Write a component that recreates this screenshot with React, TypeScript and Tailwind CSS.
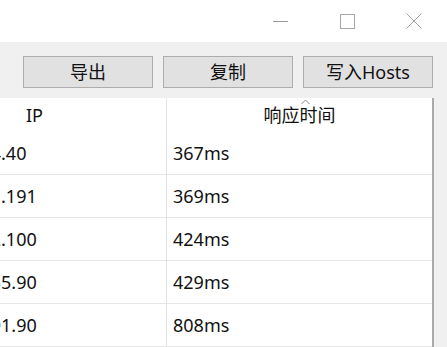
import React from "react";

const rows = [
  { ip: "104.21.234.40", time: "367ms" },
  { ip: "172.67.211.191", time: "369ms" },
  { ip: "104.18.232.100", time: "424ms" },
  { ip: "104.244.255.90", time: "429ms" },
  { ip: "104.250.191.90", time: "808ms" },
];

const font = { fontFamily: '"Noto Sans", "Noto Sans CJK SC", sans-serif' };

export default function App() {
  return (
    <div className="w-[447px] h-[347px] overflow-hidden bg-[#f0f0f0] text-[#111]" style={font}>
      {/* title bar */}
      <div className="h-[42px] bg-white flex justify-end">
        <div className="w-[67px] h-full flex items-center justify-center">
          <svg width="16" height="16" viewBox="0 0 16 16">
            <line x1="0" y1="8.5" x2="15" y2="8.5" stroke="#9a9a9a" strokeWidth="1" />
          </svg>
        </div>
        <div className="w-[67px] h-full flex items-center justify-center">
          <svg width="15" height="15" viewBox="0 0 15 15">
            <rect x="0.5" y="0.5" width="14" height="14" fill="none" stroke="#a6a6a6" strokeWidth="1" />
          </svg>
        </div>
        <div className="w-[66px] h-full flex items-center justify-center">
          <svg width="16" height="16" viewBox="0 0 16 16">
            <path d="M0.5 0.5 L15.5 15.5 M15.5 0.5 L0.5 15.5" stroke="#a6a6a6" strokeWidth="1" />
          </svg>
        </div>
      </div>

      {/* toolbar */}
      <div className="pt-[14px] pl-[23px] flex gap-[10px]">
        {["导出", "复制", "写入Hosts"].map((t) => (
          <button
            key={t}
            className="w-[130px] h-[32px] bg-[#e1e1e1] border border-[#adadad] text-[18px] leading-none text-[#111] flex items-center justify-center"
          >
            {t}
          </button>
        ))}
      </div>

      {/* list */}
      <div className="mt-[10px] w-[434px] overflow-hidden">
        <div className="-ml-[97px] w-[531px] bg-white border-r-2 border-[#a9a9ae]">
          <div className="flex h-[34px] text-[18px]">
            <div className="w-[264px] border-r border-[#e5e5e5] flex items-center justify-center">IP</div>
            <div className="relative flex-1 flex items-center justify-center">
              响应时间
              <svg className="absolute left-[134px] top-[1px]" width="9" height="6" viewBox="0 0 9 6">
                <path d="M0.5 5 L4.5 1 L8.5 5" fill="none" stroke="#8a8a8a" strokeWidth="1" />
              </svg>
            </div>
          </div>
          {rows.map((r) => (
            <div key={r.ip} className="flex h-[43px] border-b border-[#e6e6e6] text-[18px]">
              <div className="w-[264px] border-r border-[#e2e2e2] flex items-center pl-[6px]">{r.ip}</div>
              <div className="flex-1 flex items-center pl-[6px]">{r.time}</div>
            </div>
          ))}
        </div>
      </div>
    </div>
  );
}
